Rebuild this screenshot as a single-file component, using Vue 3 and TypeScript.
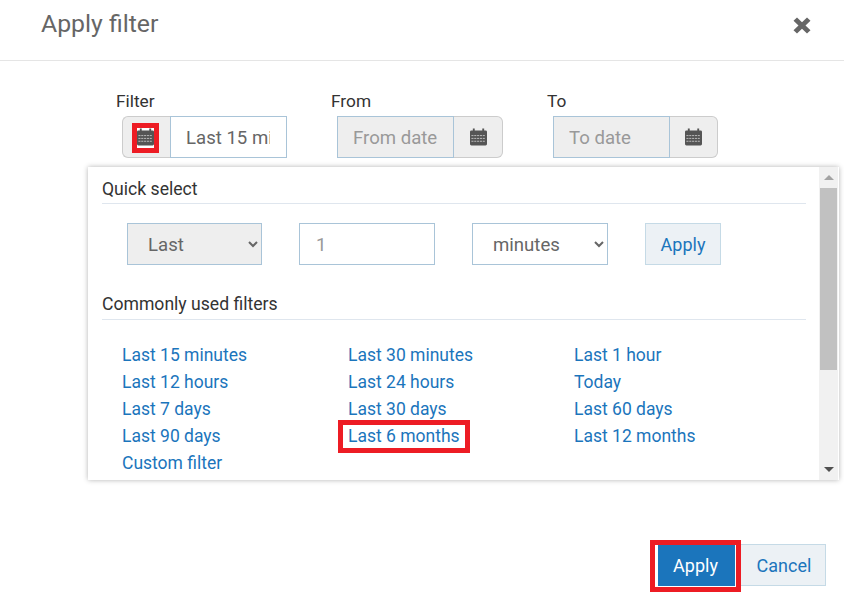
<template>
  <div class="modal">
    <header class="head">
      <h1>Apply filter</h1>
      <svg class="close" viewBox="0 0 18 18" preserveAspectRatio="none" aria-label="Close">
        <path d="M4 .5 L9 5.500 L14 .5 L17.500 4 L12.500 9 L17.500 14 L14 17.500 L9 12.500 L4 17.500 L.5 14 L5.500 9 L.5 4 Z" />
      </svg>
    </header>

    <div class="fields">
      <div class="field">
        <label>Filter</label>
        <div class="group">
          <span class="addon addon-left">
            <span class="marked-icon">
              <svg class="cal" viewBox="0 0 18 18">
                <path d="M3 0h2v2h8V0h2v2h1.500A1.500 1.500 0 0 1 18 3.500V16.500A1.500 1.500 0 0 1 16.500 18H1.500A1.500 1.500 0 0 1 0 16.500V3.500A1.500 1.500 0 0 1 1.500 2H3Z" />
                <path class="dash" d="M1.500 7.500h15M1.500 10.500h15M1.500 13.500h15" />
              </svg>
            </span>
          </span>
          <input class="input first" type="text" value="Last 15 minutes" />
        </div>
      </div>
      <div class="field">
        <label>From</label>
        <div class="group">
          <input class="input off" type="text" placeholder="From date" disabled />
          <span class="addon addon-right wide">
            <svg class="cal" viewBox="0 0 18 18">
              <path d="M3 0h2v2h8V0h2v2h1.500A1.500 1.500 0 0 1 18 3.500V16.500A1.500 1.500 0 0 1 16.500 18H1.500A1.500 1.500 0 0 1 0 16.500V3.500A1.500 1.500 0 0 1 1.500 2H3Z" />
              <path class="dash" d="M1.500 7.500h15M1.500 10.500h15M1.500 13.500h15" />
            </svg>
          </span>
        </div>
      </div>
      <div class="field">
        <label>To</label>
        <div class="group">
          <input class="input off" type="text" placeholder="To date" disabled />
          <span class="addon addon-right">
            <svg class="cal" viewBox="0 0 18 18">
              <path d="M3 0h2v2h8V0h2v2h1.500A1.500 1.500 0 0 1 18 3.500V16.500A1.500 1.500 0 0 1 16.500 18H1.500A1.500 1.500 0 0 1 0 16.500V3.500A1.500 1.500 0 0 1 1.500 2H3Z" />
              <path class="dash" d="M1.500 7.500h15M1.500 10.500h15M1.500 13.500h15" />
            </svg>
          </span>
        </div>
      </div>
    </div>

    <section class="panel">
      <div class="panel-body">
        <h4 class="section">Quick select</h4>
        <div class="quick">
          <select class="ctl sel off" disabled>
            <option>Last</option>
          </select>
          <input class="ctl num" type="text" placeholder="1" />
          <select class="ctl sel">
            <option>minutes</option>
          </select>
          <button class="btn small">Apply</button>
        </div>

        <h4 class="section second">Commonly used filters</h4>
        <ul class="links">
          <li v-for="item in filters" :key="item">
            <a href="#" :class="{ marked: item === 'Last 6 months' }">{{ item }}</a>
          </li>
        </ul>
      </div>

      <div class="scrollbar">
        <span class="arrow up" />
        <div class="track"><div class="thumb" /></div>
        <span class="arrow down" />
      </div>
    </section>

    <footer class="foot">
      <div class="marked-btn">
        <button class="btn primary">Apply</button>
      </div>
      <button class="btn cancel">Cancel</button>
    </footer>
  </div>
</template>

<script setup lang="ts">
const filters: string[] = [
  'Last 15 minutes',
  'Last 30 minutes',
  'Last 1 hour',
  'Last 12 hours',
  'Last 24 hours',
  'Today',
  'Last 7 days',
  'Last 30 days',
  'Last 60 days',
  'Last 90 days',
  'Last 6 months',
  'Last 12 months',
  'Custom filter',
]
</script>

<style>
html,
body {
  margin: 0;
  background: #fff;
}
</style>

<style scoped>
.modal {
  width: 844px;
  height: 600px;
  overflow: hidden;
  font-family: Roboto, sans-serif;
  color: #333;
  background: #fff;
}

.head {
  display: flex;
  align-items: center;
  justify-content: space-between;
  box-sizing: border-box;
  height: 61px;
  padding: 0 33px 12px 41px;
  border-bottom: 1px solid #e5e5e5;
}

.head h1 {
  margin: 0;
  font-size: 24.8px;
  font-weight: 400;
  line-height: 48px;
  color: #666;
}

.close {
  width: 18px;
  height: 17px;
  margin-top: 2px;
  fill: #666;
}

.fields {
  display: grid;
  grid-template-columns: 215px 216px 200px;
  padding: 30px 0 0 116px;
}

.field label {
  display: block;
  margin-bottom: 5px;
  font-size: 17.3px;
  line-height: 20px;
  color: #333;
}

.group {
  display: flex;
  height: 42px;
  margin-left: 6px;
}

.addon {
  display: flex;
  align-items: center;
  justify-content: center;
  box-sizing: border-box;
  background: #eee;
  border: 1px solid #ccc;
}

.addon-left {
  width: 48px;
  border-right: 0;
  border-radius: 6px 0 0 6px;
}

.addon-right {
  width: 48px;
  border-left: 0;
  border-radius: 0 6px 6px 0;
}

.addon-right.wide {
  width: 49px;
}

.cal {
  display: block;
  width: 17px;
  height: 18px;
  fill: #555;
}

.dash {
  fill: none;
  stroke: #eee;
  stroke-width: 0.7;
  stroke-dasharray: 2.2 0.8;
}

.marked-icon {
  display: block;
  margin: 2px 2px 0 0;
  padding-bottom: 2px;
  border: 5px solid #ed1c24;
  background: #fff;
}

.input {
  box-sizing: border-box;
  width: 117px;
  height: 42px;
  padding: 2px 16px 0 15px;
  border: 1px solid #a9c4d8;
  border-radius: 0;
  outline: none;
  font: 400 18.6px Roboto, sans-serif;
  color: #666;
  background: #fff;
}

.input.off {
  background: #eee;
}

.input::placeholder,
.ctl::placeholder {
  color: #999;
  opacity: 1;
}

.panel {
  display: flex;
  width: 751px;
  height: 313px;
  margin: 9px 0 0 88px;
  box-shadow: 0 0 5px rgba(0, 0, 0, 0.3);
  background: #fff;
}

.panel-body {
  flex: 1;
  min-width: 0;
  padding: 10px 13px 0 14px;
}

.section {
  margin: 0;
  padding-bottom: 2px;
  font-size: 17.6px;
  font-weight: 400;
  line-height: 24px;
  color: #333;
  border-bottom: 1px solid #dfe6ee;
}

.section.second {
  margin-top: 27px;
  padding-bottom: 3px;
}

.quick {
  display: flex;
  gap: 37px;
  margin: 19px 0 0 25px;
}

.ctl {
  box-sizing: border-box;
  width: 136px;
  height: 42px;
  padding: 2px 16px 0;
  border: 1px solid #a9c4d8;
  border-radius: 0;
  outline: none;
  font: 400 18.6px Roboto, sans-serif;
  color: #666;
  background-color: #fff;
}

.sel.off {
  width: 135px;
  background-color: #eee;
  opacity: 1;
}

.btn {
  box-sizing: border-box;
  height: 42px;
  padding: 0;
  border: 1px solid #c5dae6;
  border-radius: 0;
  font: 400 18px Roboto, sans-serif;
  color: #1b75bc;
  background: #ecf1f5;
}

.btn.small {
  width: 76px;
}

.links {
  display: grid;
  grid-template-columns: 226px 226px 226px;
  grid-auto-rows: 27px;
  margin: 22px 0 0;
  padding: 0 0 0 20px;
  list-style: none;
}

.links li {
  line-height: 27px;
}

.links a {
  font-size: 17.5px;
  color: #1b75bc;
  text-decoration: none;
}

.links a.marked {
  display: inline-block;
  margin: -3px -10px 0;
  padding: 0 5px;
  border: 5px solid #ed1c24;
  line-height: 23px;
  vertical-align: top;
}

.scrollbar {
  display: flex;
  flex-direction: column;
  align-items: center;
  flex: none;
  width: 19px;
  margin-right: 1px;
  background: #f1f1f1;
}

.arrow {
  flex: none;
  width: 0;
  height: 0;
  margin: 8px 0;
  border-left: 5px solid transparent;
  border-right: 5px solid transparent;
}

.arrow.up {
  border-bottom: 5px solid #a3a3a3;
}

.arrow.down {
  border-top: 5px solid #505050;
}

.track {
  flex: 1;
  width: 100%;
}

.thumb {
  width: 17px;
  height: 182px;
  margin: 0 auto;
  background: #c1c1c1;
}

.foot {
  display: flex;
  align-items: flex-start;
  justify-content: flex-end;
  margin-top: 60px;
  padding-right: 18px;
}

.marked-btn {
  position: relative;
  z-index: 1;
  margin-right: -1px;
  padding: 0 1px 1px 3px;
  border: 5px solid #ed1c24;
  background: #fff;
}

.btn.primary {
  display: block;
  width: 77px;
  height: 41px;
  padding-right: 2px;
  border: 0;
  color: #fff;
  background: #1b75bc;
}

.btn.cancel {
  width: 86px;
  margin-top: 4px;
  padding-left: 2px;
}
</style>
